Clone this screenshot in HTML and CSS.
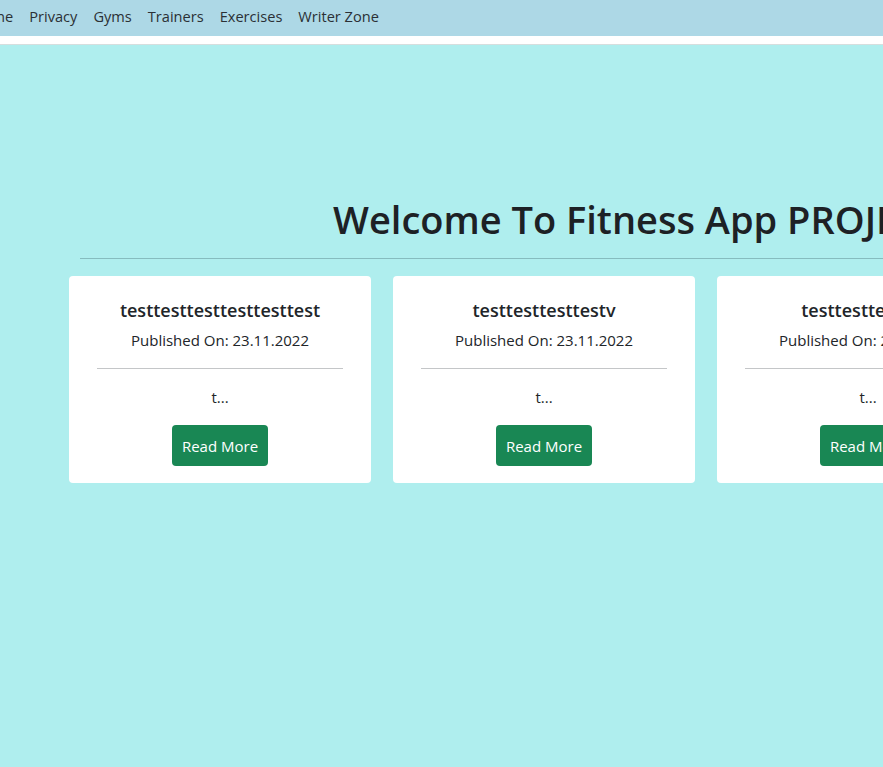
FILE: index.html
```html
<!DOCTYPE html>
<html lang="en">
<head>
<meta charset="utf-8">
<title>Fitness App</title>
<link rel="stylesheet" href="styles.css">
</head>
<body>
<header class="topbar">
  <nav class="nav">
    <a class="nav-link" href="#">Home</a>
    <a class="nav-link" href="#">Privacy</a>
    <a class="nav-link" href="#">Gyms</a>
    <a class="nav-link" href="#">Trainers</a>
    <a class="nav-link" href="#">Exercises</a>
    <a class="nav-link" href="#">Writer Zone</a>
  </nav>
</header>
<div class="spacer"></div>
<main class="main">
  <section class="hero">
    <h1 class="title">Welcome To Fitness App PROJECT</h1>
    <hr class="hero-rule">
  </section>
  <section class="cards">
    <article class="card">
      <h5 class="card-title">testtesttesttesttesttest</h5>
      <p class="card-date">Published On: 23.11.2022</p>
      <hr class="card-rule">
      <p class="card-text">t...</p>
      <a class="btn" href="#">Read More</a>
    </article>
    <article class="card">
      <h5 class="card-title">testtesttesttestv</h5>
      <p class="card-date">Published On: 23.11.2022</p>
      <hr class="card-rule">
      <p class="card-text">t...</p>
      <a class="btn" href="#">Read More</a>
    </article>
    <article class="card">
      <h5 class="card-title">testtesttesttest</h5>
      <p class="card-date">Published On: 23.11.2022</p>
      <hr class="card-rule">
      <p class="card-text">t...</p>
      <a class="btn" href="#">Read More</a>
    </article>
  </section>
</main>
</body>
</html>
```
FILE: styles.css
```css
* { box-sizing: border-box; }
html, body {
  margin: 0;
  padding: 0;
  height: 100%;
}
body {
  font-family: "Open Sans", "Noto Sans", sans-serif;
  color: #212529;
  background: #afeeee;
  overflow: hidden;
  width: 883px;
}
.topbar {
  height: 36px;
  background: #add8e6;
  display: flex;
  align-items: center;
  padding-bottom: 4px;
  overflow: hidden;
}
.nav {
  display: flex;
  margin-left: -36px;
}
.nav-link {
  color: #2b3035;
  text-decoration: none;
  font-size: 14.6px;
  padding: 0 8px;
  line-height: 20px;
}
.spacer {
  height: 9px;
  background: #fff;
  border-bottom: 1px solid #d6dede;
}
.main {
  padding-top: 150px;
}
.hero {
  margin-left: 80px;
}
.title {
  margin: 0;
  padding-left: 253px;
  font-size: 38px;
  font-weight: 600;
  line-height: 48px;
  white-space: nowrap;
  color: #1d2125;
}
.hero-rule {
  margin: 15px 0 0;
  border: 0;
  border-top: 1px solid #86bcbf;
}
.cards {
  display: flex;
  gap: 22px;
  margin-left: 69px;
  margin-top: 17px;
}
.card {
  flex: 0 0 302px;
  height: 207px;
  background: #fff;
  border-radius: 4px;
  display: flex;
  flex-direction: column;
  align-items: center;
  padding: 21px 28px 0;
  text-align: center;
}
.card-title {
  margin: 0;
  font-size: 18px;
  font-weight: 600;
  line-height: 26px;
}
.card-date {
  margin: 5px 0 0;
  font-size: 15px;
  line-height: 24px;
}
.card-rule {
  width: 100%;
  margin: 16px 0 0;
  border: 0;
  border-top: 1px solid #c4c6c8;
}
.card-text {
  margin: 16px 0 0;
  font-size: 15px;
  line-height: 24px;
}
.btn {
  margin-top: 16px;
  display: inline-block;
  width: 96px;
  height: 41px;
  line-height: 42px;
  background: #198754;
  color: #fff;
  text-decoration: none;
  font-size: 15px;
  border-radius: 4px;
}
```
